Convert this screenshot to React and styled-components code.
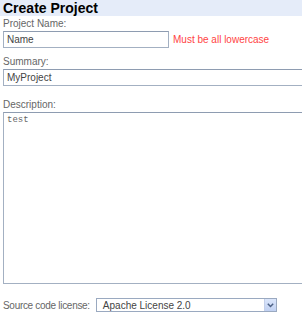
import React from "react";
import styled, { createGlobalStyle } from "styled-components";

const GlobalStyle = createGlobalStyle`
  html, body {
    margin: 0;
    padding: 0;
    background: #fff;
    overflow: hidden;
  }
  body {
    font-family: "Liberation Sans", Arial, sans-serif;
  }
`;

const Page = styled.div`
  width: 302px;
  height: 320px;
  overflow: hidden;
`;

const Header = styled.h1`
  margin: 0;
  height: 16px;
  padding-left: 3px;
  background: #e5ecf9;
  font-size: 14px;
  font-weight: bold;
  line-height: 16px;
  color: #000;
  white-space: nowrap;
`;

const Form = styled.form`
  display: flex;
  flex-direction: column;
  align-items: flex-start;
  padding: 2px 0 0 3px;
`;

const Field = styled.div`
  display: flex;
  flex-direction: column;
  margin-top: ${(p) => p.$gap || 0}px;
`;

const Label = styled.label`
  display: block;
  font-size: 10px;
  line-height: 12px;
  height: 12px;
  color: #666;
  white-space: nowrap;
`;

const Row = styled.div`
  display: flex;
  align-items: center;
  gap: 4px;
  margin-top: 1px;
`;

const TextInput = styled.input`
  box-sizing: border-box;
  flex-shrink: 0;
  width: ${(p) => p.$width}px;
  height: 17px;
  margin: 0;
  padding: 0 3px;
  border: 1px solid #a3b0c2;
  border-top-color: #8e9cb1;
  font-family: "Liberation Sans", Arial, sans-serif;
  font-size: 10px;
  color: #444;
  background: #fff;
  outline: none;
`;

const Error = styled.span`
  font-size: 10px;
  color: #f44;
  white-space: nowrap;
`;

const TextArea = styled.textarea`
  box-sizing: border-box;
  flex-shrink: 0;
  width: 400px;
  height: 172px;
  margin: 1px 0 0;
  padding: 2px 3px;
  border: 1px solid #a3b0c2;
  border-top-color: #8e9cb1;
  font-family: "Liberation Mono", "Courier New", monospace;
  font-size: 9px;
  line-height: 11px;
  color: #666;
  resize: none;
  outline: none;
`;

const LicenseRow = styled.div`
  display: flex;
  align-items: center;
  gap: 6px;
  margin-top: 14px;
`;

const InlineLabel = styled.span`
  font-size: 10px;
  letter-spacing: -0.3px;
  color: #666;
  white-space: nowrap;
`;

const SelectBox = styled.div`
  box-sizing: border-box;
  width: 181px;
  height: 14px;
  display: flex;
  align-items: center;
  border: 1px solid #9aa9c0;
  background: #fff;
`;

const SelectValue = styled.span`
  flex: 1;
  padding-left: 6px;
  font-size: 10px;
  color: #444;
  white-space: nowrap;
`;

const ArrowButton = styled.span`
  box-sizing: border-box;
  width: 12px;
  height: 12px;
  display: flex;
  align-items: center;
  justify-content: center;
  background: linear-gradient(#dbe6fb, #c1d1f2);
  border-left: 1px solid #c4d0ea;
`;

const Chevron = () => (
  <svg width="7" height="5" viewBox="0 0 7 5">
    <path d="M0.8 0.8 L3.5 3.5 L6.2 0.8" fill="none" stroke="#4d6185" strokeWidth="1.5" />
  </svg>
);

const App = () => {
  return (
    <Page>
      <GlobalStyle />
      <Header>Create Project</Header>
      <Form>
        <Field>
          <Label>Project Name:</Label>
          <Row>
            <TextInput $width={166} defaultValue="Name" />
            <Error>Must be all lowercase</Error>
          </Row>
        </Field>
        <Field $gap={8}>
          <Label>Summary:</Label>
          <Row>
            <TextInput $width={400} defaultValue="MyProject" />
          </Row>
        </Field>
        <Field $gap={13}>
          <Label>Description:</Label>
          <TextArea defaultValue="test" />
        </Field>
        <LicenseRow>
          <InlineLabel>Source code license:</InlineLabel>
          <SelectBox>
            <SelectValue>Apache License 2.0</SelectValue>
            <ArrowButton>
              <Chevron />
            </ArrowButton>
          </SelectBox>
        </LicenseRow>
      </Form>
    </Page>
  );
};

export default App;
